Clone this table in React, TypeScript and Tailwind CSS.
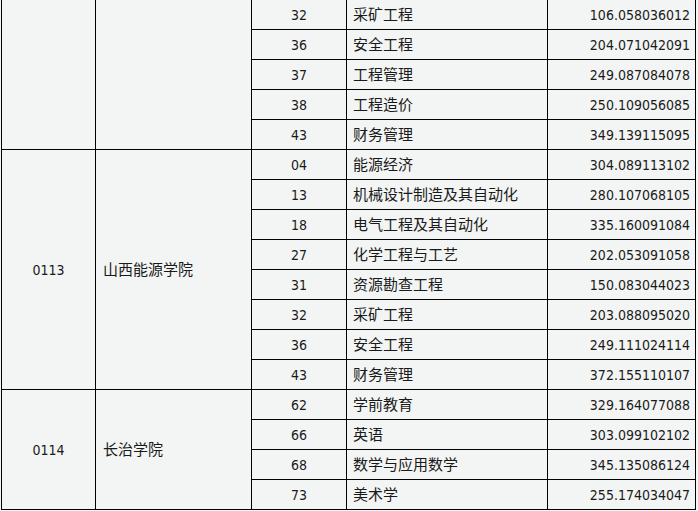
import React from "react";

type Row = [string, string, string];

const groups: { code: string; name: string; span: string; rows: Row[] }[] = [
  {
    code: "",
    name: "",
    span: "row-span-5",
    rows: [
      ["32", "采矿工程", "106.058036012"],
      ["36", "安全工程", "204.071042091"],
      ["37", "工程管理", "249.087084078"],
      ["38", "工程造价", "250.109056085"],
      ["43", "财务管理", "349.139115095"],
    ],
  },
  {
    code: "0113",
    name: "山西能源学院",
    span: "row-span-8",
    rows: [
      ["04", "能源经济", "304.089113102"],
      ["13", "机械设计制造及其自动化", "280.107068105"],
      ["18", "电气工程及其自动化", "335.160091084"],
      ["27", "化学工程与工艺", "202.053091058"],
      ["31", "资源勘查工程", "150.083044023"],
      ["32", "采矿工程", "203.088095020"],
      ["36", "安全工程", "249.111024114"],
      ["43", "财务管理", "372.155110107"],
    ],
  },
  {
    code: "0114",
    name: "长治学院",
    span: "row-span-4",
    rows: [
      ["62", "学前教育", "329.164077088"],
      ["66", "英语", "303.099102102"],
      ["68", "数学与应用数学", "345.135086124"],
      ["73", "美术学", "255.174034047"],
    ],
  },
];

const latin = "font-['DejaVu_Sans_Condensed','DejaVu_Sans',sans-serif] font-stretch-condensed text-[14px]";
const cjk = "font-['Noto_Sans_CJK_SC',sans-serif] text-[15px] pb-[2px]";

export default function App() {
  return (
    <div className="w-[698px] h-[511px] overflow-hidden bg-[#f3f5f4] pl-px text-[#1a1a1a]">
      <div className="-mt-px w-[695px] grid grid-cols-[93px_155px_94px_200px_147px] grid-rows-[repeat(17,29px)] gap-px bg-black p-px">
        {groups.map((g, gi) => (
          <React.Fragment key={gi}>
            <div className={`${g.span} bg-[#f3f5f4] flex items-center justify-center leading-none ${latin}`}>
              {g.code}
            </div>
            <div className={`${g.span} bg-[#f3f5f4] flex items-center pl-[7px] leading-none ${cjk}`}>
              {g.name}
            </div>
            {g.rows.map((r, ri) => (
              <React.Fragment key={ri}>
                <div className={`bg-[#f3f5f4] flex items-center justify-center leading-none ${latin}`}>
                  {r[0]}
                </div>
                <div className={`bg-[#f3f5f4] flex items-center pl-[6px] leading-none ${cjk}`}>
                  {r[1]}
                </div>
                <div className={`bg-[#f3f5f4] flex items-center justify-end pr-[5px] leading-none ${latin}`}>
                  {r[2]}
                </div>
              </React.Fragment>
            ))}
          </React.Fragment>
        ))}
      </div>
    </div>
  );
}
